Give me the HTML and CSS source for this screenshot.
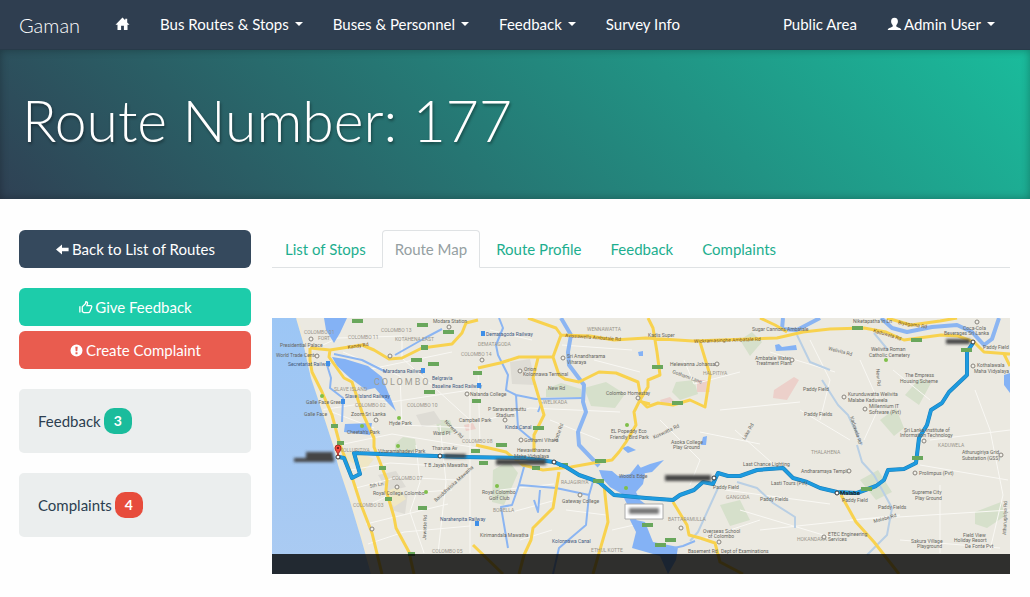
FILE: index.html
```html
<!DOCTYPE html>
<html lang="en">
<head>
<meta charset="utf-8">
<meta name="viewport" content="width=device-width, initial-scale=1">
<title>Gaman - Route Number: 177</title>
<link rel="stylesheet" href="styles.css">
</head>
<body>
<nav class="navbar">
  <a class="brand" href="#">Gaman</a>
  <a class="nav-item" href="#" aria-label="Home"><svg class="icon" viewBox="0 0 15 15"><path d="M7.500 .5 .5 7.800h2V13h3.600V8.800h2.800V13h3.600V7.800h2L12.200 5.400V1.800h-2v1.500z"/></svg></a>
  <button class="nav-item" type="button">Bus Routes &amp; Stops<span class="caret"></span></button>
  <button class="nav-item" type="button">Buses &amp; Personnel<span class="caret"></span></button>
  <button class="nav-item" type="button">Feedback<span class="caret"></span></button>
  <a class="nav-item" href="#">Survey Info</a>
  <a class="nav-item nav-right" href="#">Public Area</a>
  <button class="nav-item" type="button"><svg class="icon user" viewBox="0 0 15 15"><path d="M7.500 .8C5.200 .8 4 2.300 4.100 4.400c.1 1.600.7 2.800 1.600 3.600v1.400c-.7.9-4.400 1.300-4.900 3V13h13.400v-.6c-.5-1.700-4.200-2.100-4.900-3V8c.9-.8 1.500-2 1.600-3.600C11 2.300 9.800 .8 7.500 .8z"/></svg>Admin User<span class="caret"></span></button>
</nav>

<header class="hero">
  <h1>Route Number: 177</h1>
</header>

<div class="layout">
  <aside>
    <a class="btn btn-dark" href="#"><svg class="icon" viewBox="0 0 15 15"><path d="M1 7.500 7 2.500v3.200h6.600v3.600H7v3.200z"/></svg>Back to List of Routes</a>
    <button class="btn btn-green" type="button"><svg class="icon" viewBox="0 0 15 15"><path d="M1.200 6.200v6.200h1.300V6.200z"/><path d="M4.300 11.600V6.700l3.100-3 .5-2c1.500 0 1.900 1.100 1.500 2.300l-.5 1.700h3.800c1.100 0 1.300.8.900 1.700l-1.800 4.400c-.3.700-.7.900-1.400.9H6z" fill="none" stroke="currentColor" stroke-width="1.300"/></svg>Give Feedback</button>
    <button class="btn btn-red" type="button"><svg class="icon" viewBox="0 0 15 15"><path fill-rule="evenodd" d="M7.500 1.500a6 6 0 1 0 0 12 6 6 0 0 0 0-12zM6.300 3.700h2.400l-.4 4.600H6.700zM6.500 9.300h2v1.900h-2z"/></svg>Create Complaint</button>
    <div class="well">Feedback <span class="badge">3</span></div>
    <div class="well">Complaints <span class="badge badge-red">4</span></div>
  </aside>

  <main>
    <div class="tabs">
      <a class="tab" href="#">List of Stops</a>
      <a class="tab active" href="#" aria-current="page">Route Map</a>
      <a class="tab" href="#">Route Profile</a>
      <a class="tab" href="#">Feedback</a>
      <a class="tab" href="#">Complaints</a>
    </div>

    <svg class="map" viewBox="272 318 738 256" role="img" aria-label="Map of route 177">
      <defs>
        <linearGradient id="sea" x1="0" y1="0" x2="0" y2="1"><stop offset="0" stop-color="#9cc6f5"/><stop offset="1" stop-color="#abcbf2"/></linearGradient>
        <filter id="smudge" x="-20%" y="-60%" width="140%" height="220%"><feGaussianBlur stdDeviation="1.600"/></filter>
      </defs>
      <rect x="272" y="318" width="738" height="256" fill="#ebe9e1"/>

      <g class="park">
        <path d="M395 444l8-7 12 2 2 12-22 5zM546 389l15-6 20 6 1 8-36 0zM584 388l22-6 19 12-10 14-24-2zM493 470l16-9 9 12-14 32-12-3zM676 382l18-2 4 14-18 6-8-8zM975 512l26-10 4 14-18 12-12-4zM740 340l12-8 10 10-12 14zM860 480l18-10 14 22-16 8zM880 420l16-12 8 20-10 8zM435 420l15 0 4 12-14 4zM624 478l7 0 0 14-7-2zM720 505l20-5 10 20-20 6zM905 395l14-16 12 4-12 22z"/>
      </g>
      <path d="M510 362l20-3 6 26-24-1zM378 475l18-4 10 16-18 4zM393 495l15-3-3 22-14-4zM416 415l18-4 8 12-20 4z" fill="#dedcd5"/>
      <path d="M697 380l11 0 2 12-13 0zM774 390l20-13 5 3-12 20-14-2zM464 425l9-2 3 6-10 2zM660 400l10-3 5 5-13 2z" fill="#ecd0ca"/>
      <path d="M340 454l16-3 18 8-10 12zM384 492l14-5 8 12-12 8z" fill="#efe7c5"/>

      <g class="streets">
        <path d="M312 350L338 338 402 336M335 340V318M343 352L400 376 402 425 470 428M366 370L452 352M378 404L470 390M402 336V358M350 396L390 400M320 410L360 404M332 412L374 428M344 444L392 434 478 448M351 470L390 463 440 466M356 488L398 477 456 480M362 508L392 494 452 490M366 524L448 504M368 544L404 532 470 526M402 358L470 420M416 445L420 482 410 512 424 553M440 425L446 482 438 553M470 386V553M478 368L480 445M490 330L532 340M486 420L530 408 620 412M550 420L600 440M500 490L554 484M512 512L556 500M520 540L552 530M566 510L606 515M612 530L634 525M562 345L632 350M594 360L640 372M684 360L694 384 740 372M720 410L800 402M735 430L780 470M660 420L700 460 690 485M700 432L760 444M800 410L850 440M770 352L835 372M725 490L830 504M740 510L840 540M760 530L900 515M700 540L760 520M810 340L830 380 820 420M860 360L880 405 864 440M893 370L930 400M930 440L1010 430M920 465L1008 480M940 485V553M850 520L1010 510M900 540L1000 548M975 390L990 430 1003 495 990 550"/>
      </g>

      <path fill="url(#sea)" d="M272 318H297L304 342 309 365 312 378 322 408 334 445 339 465 350 498 362 538 372 574H272z"/>
      <path class="coast" d="M297 318L304 342 309 365 312 378 322 408 334 445 339 465 350 498 362 538 372 574"/>

      <g class="water">
        <path d="M324 318H347L340 333 334 343 326 330zM332 357L345 359 368 366 382 377 388 392 396 411 386 401 375 388 366 390 350 378 337 366zM345 424L372 423 370 435 344 432zM599 470L612 471 618 476 630 474 638 464 645 474 643 484 636 492 640 500 648 506 636 520 645 522 653 542 678 547 676 560 668 574 660 556 632 548 636 532 630 520 628 506 622 494 610 487 602 478zM775 345l4-1 3 3 14-2 1 5-21 1zM1004 375l6-2v20l-6-8zM622 448l6-2 8 4-8 3zM638 352l5-1 0 5-4 0zM703 437l4-1-1 9-5 0zM640 468l10-4 14-4-12 12-12 2z"/>
      </g>
      <g class="canal">
        <path class="wide" d="M561 318L571 335 568 352 569 365 584 385 583 402 586 412 578 432 579 445 599 466M881 318L892 328 907 332 932 327 957 325 972 332 984 345 992 339 999 318M783 318L782 329 797 330 820 318"/>
        <path d="M327 365L331 378 330 388 343 398 342 422M334 354L362 360 386 372M499 318L503 328 496 345 498 355 508 375 506 390 516 395 536 399 583 398M516 395L518 428 536 443M442 329L425 338 395 355M594 478L589 495 556 488 519 485 524 467M519 485L512 505 501 507 508 548M540 490L538 512 534 500M589 495L586 525 559 548 553 574M695 541L683 546 674 548M538 412l4-10"/>
        <path class="pale" d="M718 488L698 532 690 541M737 482L757 488 773 503 795 517 795 528M857 445L862 462 874 475 892 508 887 535 867 555M822 380L838 405 848 415 862 445M797 335L810 362 830 370M874 333L888 350"/>
      </g>

      <g class="road">
        <path d="M310 348L310 360 312 372 322 392 332 415 340 445 344 455 352 477 360 502 372 533 382 574M310 348L330 350 362 345 374 350 389 359 402 358 422 348 452 344 462 333 466 323 478 320M330 350L329 357 344 378 352 382 362 412 374 438 374 447 387 480 386 490 394 517 396 528 409 552 414 574M478 368L500 363 519 357 553 357 561 335 556 328 528 318M561 335L590 336 614 340 646 338 693 341 777 338 803 332 830 329 864 328 886 332 904 340 941 335 958 336 974 342 984 352 1010 354M887 318L911 325 940 321 957 318M760 318L775 325 787 332M1004 354L1010 366M553 357L559 375 565 379 579 382 599 372 616 373 638 382 641 398 634 412 636 425 626 442 619 452 612 460 599 462 571 467 543 470 523 465 506 452 476 445M538 358L533 378 544 415 534 435 534 452M648 318L653 328 657 352 660 375 648 380 648 387 640 400 647 407 658 403 673 405 690 400 705 407 710 375 700 342M642 402L650 404M559 472L553 508 533 528 531 540 524 555 519 574M604 485L608 522 593 574M473 545L503 574M673 502L687 525 689 535 700 538 715 543 720 562 743 574M841 495L856 522 874 542 899 574"/>
      </g>

      <g class="shields">
        <path d="M352 319h11v4h-11zM417 323h11v4h-11zM443 330h11v4h-11zM421 345h7v5h-7zM411 358h11v4h-11zM428 362h11v4h-11zM424 390h11v4h-11zM331 424h7v4h-7zM337 441h7v4h-7zM473 371h9v4h-9zM472 399h9v4h-9zM533 426h11v4h-11zM496 443h11v4h-11zM471 449h9v4h-9zM479 461h9v4h-9zM532 466h8v4h-8zM595 459h11v4h-11zM559 463h9v4h-9zM593 479h11v4h-11zM379 466h7v4h-7zM385 497h7v4h-7zM418 506h9v4h-9zM408 552h7v4h-7zM652 365h11v4h-11zM672 401h11v4h-11zM642 523h11v4h-11zM665 538h11v4h-11zM655 543h11v4h-11zM852 326h11v4h-11zM911 338h11v4h-11zM961 348h11v4h-11zM861 487h11v4h-11zM912 456h11v4h-11z"/>
      </g>

      <path class="route-edge" d="M339 457L344 458 352 478 360 474 354 453 462 457 523 458 554 462 566 467 579 475 599 482 614 495 646 498 673 500 680 495 694 490 703 482 713 484 718 473 728 476 740 476 757 470 783 468 793 478 807 482 820 488 837 492 857 493 876 486 884 480 888 470 904 469 916 463 919 438 927 425 931 410 942 403 949 392 967 375 967 352 973 343"/>
      <path class="route" d="M339 457L344 458 352 478 360 474 354 453 462 457 523 458 554 462 566 467 579 475 599 482 614 495 646 498 673 500 680 495 694 490 703 482 713 484 718 473 728 476 740 476 757 470 783 468 793 478 807 482 820 488 837 492 857 493 876 486 884 480 888 470 904 469 916 463 919 438 927 425 931 410 942 403 949 392 967 375 967 352 973 343"/>
      <path d="M861 487h11v4h-11zM912 456h11v4h-11zM961 348h11v4h-11zM593 479h11v4h-11z" fill="#69a75c"/>

      <g class="district">
        <text x="304" y="334">COLOMBO 01</text><text x="318" y="340">FORT</text><text x="348" y="339">COLOMBO 11</text><text x="381" y="332">COLOMBO 13</text><text x="395" y="341">KOTAHENA EAST</text><text x="334" y="391">SLAVE ISLAND</text><text x="355" y="407">COLOMBO 02</text><text x="407" y="407">COLOMBO 10</text><text x="461" y="356">COLOMBO 14</text><text x="478" y="346">DEMATAGODA</text><text x="462" y="443">COLOMBO 08</text><text x="392" y="480">COLOMBO 07</text><text x="353" y="507">COLOMBO 03</text><text x="432" y="553">COLOMBO 05</text><text x="587" y="331">WENNAWATTA</text><text x="543" y="404">WELIKADA</text><text x="493" y="512">BORELLA</text><text x="561" y="484">RAJAGIRIYA</text><text x="591" y="552">ETHUL KOTTE</text><text x="668" y="521">BATTARAMULLA</text><text x="726" y="499">GANGODA</text><text x="703" y="375">HALPITIYA</text><text x="797" y="541">HOKANDARA</text><text x="811" y="454">THALAHENA</text><text x="938" y="447">KADUWELA</text><text x="340" y="452">KOLLUPITIYA</text>
      </g>
      <text class="city" x="374" y="385">COLOMBO</text>

      <g class="place">
        <text x="280" y="347">Presidential Palace</text><text x="276" y="357">World Trade Center</text><text x="433" y="323">Modara Station</text><text x="306" y="404">Galle Face Green</text><text x="304" y="416">Galle Face</text><text x="351" y="416">Zoom Sri Lanka</text><text x="347" y="434">Cheetah's Park</text><text x="389" y="425">Hyde Park</text><text x="433" y="435">Ward Pl</text><text x="470" y="396">Nalanda College</text><text x="459" y="422">Campbell Park</text><text x="488" y="411">P Saravanamuttu</text><text x="496" y="417">Stadium</text><text x="524" y="371">Orion</text><text x="523" y="376">Kolonnawa Terminal</text><text x="567" y="358">Sri Anandharama</text><text x="567" y="364">Viharaya</text><text x="606" y="395">Colombo Homestay</text><text x="611" y="433">EL Popeddy Eco</text><text x="610" y="439">Friendly Bird Park</text><text x="524" y="442">Gothami Vihara</text><text x="517" y="452">Hewavitharana</text><text x="514" y="458">Maha Vidyalaya</text><text x="548" y="390">New Rd</text><text x="619" y="478">Wood's Edge</text><text x="562" y="503">Gateway College</text><text x="482" y="494">Royal Colombo</text><text x="489" y="500">Golf Club</text><text x="480" y="537">Kirimandala Mawatha</text><text x="373" y="495">Royal College Colombo</text><text x="378" y="453">Viharamahadevi Park</text><text x="424" y="467">T B Jayah Mawatha</text><text x="432" y="450">Tharuna Av</text><text x="648" y="337">Kadis Super</text><text x="752" y="331">Sugar Cannons Ambatale</text><text x="670" y="366">Helewanna Johansan</text><text x="755" y="360">Ambatale Water</text><text x="756" y="365">Treatment Plant</text><text x="803" y="391">Paddy Field</text><text x="804" y="416">Paddy Fields</text><text x="671" y="444">Asoka College</text><text x="673" y="449">Play Ground</text><text x="853" y="323">Niketapatha In Ln</text><text x="871" y="351">Welivita Roman</text><text x="869" y="357">Catholic Cemetery</text><text x="963" y="330">Coca-Cola</text><text x="944" y="335">Beverages Sri Lanka</text><text x="983" y="349">Paddy Field</text><text x="977" y="367">Kothalawala</text><text x="974" y="373">Maha Vidyalaya</text><text x="905" y="377">The Empress</text><text x="900" y="383">Housing Scheme</text><text x="848" y="396">Kurunduwatta Welivita</text><text x="848" y="402">Malabe Kaduwela</text><text x="869" y="408">Millennium IT</text><text x="869" y="414">Software (Pvt)</text><text x="904" y="432">Sri Lanka Institute of</text><text x="900" y="437">Information Technology</text><text x="962" y="454">Athurugiriya Grid</text><text x="962" y="460">Substation (GSS)</text><text x="919" y="475">Prolimpus (Pvt)</text><text x="912" y="494">Supreme City</text><text x="915" y="500">Play Ground</text><text x="842" y="502">Paddy Field</text><text x="878" y="509">Paddy Fields</text><text x="828" y="536">ETEC Engineering</text><text x="828" y="541">Services</text><text x="911" y="543">Sakura Village</text><text x="917" y="548">Playground</text><text x="963" y="537">Field View</text><text x="954" y="542">Holiday Resort</text><text x="965" y="548">De Fonte Pvt</text><text x="743" y="466">Last Chance Lighting</text><text x="801" y="473">Andharamaya Temple</text><text x="771" y="485">Lasti Tours (Pvt)</text><text x="713" y="489">Paddy Field</text><text x="760" y="501">Paddy Fields</text><text x="703" y="533">Overseas School</text><text x="708" y="538">of Colombo</text><text x="688" y="553">Basement Rd</text><text x="721" y="553">Dept of Examinations</text>
        <text transform="translate(436 502) rotate(-42)">Bauddhaloka Mawatha</text><text transform="translate(444 422) rotate(44)">Norway Rd</text><text transform="translate(672 373) rotate(20)">Gothami Lane</text><text transform="translate(654 439) rotate(-25)">Koswatta Rd</text><text transform="translate(828 350) rotate(14)">Welivita Rd</text><text transform="translate(557 442) rotate(-70)">Kotte Rd</text><text transform="translate(426 540) rotate(-88)">Jawatte Rd</text><text transform="translate(850 417) rotate(72)">Kaduwela Rd</text><text transform="translate(874 523) rotate(-15)">Malabe Rd</text><text transform="translate(370 488) rotate(-12)">5th Ln</text><text transform="translate(745 440) rotate(-60)">Lake Rd</text><text transform="translate(1006 535) rotate(-88)">Athurugiriya Rd</text><text transform="translate(876 369) rotate(85)">New Rd</text>
      </g>
      <g class="rail">
        <text x="288" y="366">Secretariat Railway</text><text x="345" y="398">Slave Island Railway</text><text x="383" y="373">Maradana Railway</text><text x="432" y="380">Belgravia</text><text x="432" y="388">Baseline Road Railway</text><text x="486" y="336">Dematagoda Railway</text><text x="505" y="429">Kinda Canal</text><text x="552" y="543">Kolonnawa Canal</text><text x="440" y="521">Narahenpita Railway</text>
        <path d="M326 361h4v5h-4zM341 399h4v5h-4zM421 368h4v5h-4zM481 331h4v5h-4zM477 383h4v5h-4zM475 521h4v5h-4z"/>
      </g>
      <g class="road-name">
        <text transform="translate(348 349) rotate(-9)">Kandy Rd</text><text transform="translate(565 337) rotate(4)">Avissawella Ambatale Rd</text><text transform="translate(694 343) rotate(-2)">Wickramasinghe Ambatale Rd</text><text transform="translate(873 332) rotate(17)">Kaduwela Rd</text><text transform="translate(898 324) rotate(9)">Biyagama Rd</text>
      </g>
      <g class="pins">
        <circle cx="317" cy="356" r="2"/><circle cx="311" cy="339" r="2"/><circle cx="390" cy="356" r="2"/><circle cx="376" cy="420" r="2"/><circle cx="449" cy="327" r="2"/><circle cx="482" cy="360" r="2"/><circle cx="467" cy="394" r="2"/><circle cx="520" cy="371" r="2"/><circle cx="563" cy="358" r="2"/><circle cx="505" cy="420" r="2"/><circle cx="521" cy="440" r="2"/><circle cx="580" cy="495" r="2"/><circle cx="638" cy="398" r="2"/><circle cx="717" cy="364" r="2"/><circle cx="792" cy="360" r="2"/><circle cx="977" cy="322" r="2"/><circle cx="973" cy="366" r="2"/><circle cx="844" cy="397" r="2"/><circle cx="865" cy="409" r="2"/><circle cx="924" cy="441" r="2"/><circle cx="1001" cy="455" r="2"/><circle cx="915" cy="473" r="2"/><circle cx="824" cy="537" r="2"/><circle cx="681" cy="528" r="2"/><circle cx="719" cy="542" r="2"/><circle cx="849" cy="471" r="2"/><circle cx="397" cy="487" r="2"/><circle cx="372" cy="529" r="2"/>
      </g>
      <g class="park-pins"><circle cx="322" cy="396" r="2"/><circle cx="362" cy="426" r="2"/><circle cx="399" cy="418" r="2"/><circle cx="398" cy="446" r="2"/><circle cx="426" cy="492" r="2"/><circle cx="497" cy="486" r="2"/><circle cx="627" cy="425" r="2"/><circle cx="626" cy="488" r="2"/><circle cx="886" cy="360" r="2"/></g>

      <g class="smudge" filter="url(#smudge)">
        <path d="M306 452h27v5h1v5h-40v-4h12zM496 459h50v6h-50zM665 475h46v6h-46zM946 339h24v5h-24z"/>
        <path d="M444 454h22v4h-22z"/>
      </g>
      <path d="M625 504h38v15h-38z" fill="#fff" stroke="#aaa"/>
      <path d="M629 508h30v6h-30z" fill="#777" filter="url(#smudge)"/>
      <text class="stop" x="840" y="495">Malabe</text>
      <g fill="#fff" stroke="#333"><circle cx="338" cy="457" r="2"/><circle cx="440" cy="456" r="2"/><circle cx="554" cy="462" r="2"/><circle cx="714" cy="478" r="2"/><circle cx="837" cy="493" r="2"/><circle cx="973" cy="342" r="2"/></g>
      <path d="M338 456c0-4-3-5-3-8a3 3 0 0 1 6 0c0 3-3 4-3 8z" fill="#f44a3c" stroke="#a82c23"/><circle cx="338" cy="448" r="1" fill="#521510"/>
      <rect x="272" y="554" width="738" height="20" fill="#000" fill-opacity=".8"/>
    </svg>
  </main>
</div>
</body>
</html>
```
FILE: styles.css
```css
* { box-sizing: border-box; }

body {
  margin: 0;
  background: #fefefe;
  color: #2c3e50;
  font: 15px/22px Lato, sans-serif;
}

a { text-decoration: none; }
button { font: inherit; border: 0; cursor: pointer; }

.icon { width: 15px; height: 15px; fill: currentColor; flex: none; }

.navbar {
  display: flex;
  align-items: center;
  min-height: 50px;
  padding: 0 20px 0 19px;
  background: #2f3e50;
  border-bottom: 1px solid #283a49;
}
.brand { margin-right: 20px; color: #fff; font-size: 20px; font-weight: 300; }
.nav-item {
  display: flex;
  align-items: center;
  padding: 13px 15px 14px;
  background: none;
  color: #fff;
  white-space: nowrap;
}
.nav-item:last-child { padding-right: 15px; }
.nav-right { margin-left: auto; }
.user { margin-right: 2px; }
.caret {
  margin-left: 6px;
  border: 4px solid transparent;
  border-top-color: currentColor;
  border-bottom: 0;
}
.navbar > :last-child { margin-right: -1px; padding-right: 15px; }
.navbar { padding-right: 0; }
.navbar > :last-child { margin-right: 20px; }

.hero {
  padding: 34px 22px 43px;
  background: linear-gradient(45deg, #2f4154, #1abc9c);
  box-shadow: inset 0 0 8px rgba(0, 0, 0, .3);
}
.hero h1 {
  margin: 0;
  color: #fff;
  font-size: 57px;
  line-height: 72px;
  font-weight: 300;
  text-shadow: 1px 2px 3px rgba(0, 0, 0, .4);
}

.layout {
  display: grid;
  grid-template-columns: 232fr 738fr;
  gap: 21px;
  padding: 31px 20px 23px 19px;
}

.btn {
  display: flex;
  align-items: center;
  justify-content: center;
  gap: 2px;
  width: 100%;
  padding: 8px 12px;
  border-radius: 6px;
  color: #fff;
}
.btn-dark { margin-bottom: 20px; background: #35495d; }
.btn-green { margin-bottom: 5px; background: #1dccaa; }
.btn-red { background: #e95c4f; }

.well {
  display: flex;
  align-items: center;
  gap: 3px;
  margin-top: 20px;
  padding: 19px;
  border-radius: 5px;
  background: #ebeeee;
}
.badge {
  padding: 0 10px;
  border-radius: 10px;
  background: #1abc9c;
  color: #fff;
  font-size: 14px;
  font-weight: 700;
  line-height: 26px;
}
.badge-red { background: #e74c3c; }

.tabs {
  display: flex;
  gap: 3px;
  margin-bottom: 50px;
  border-bottom: 1px solid #dfe2e4;
}
.tab {
  margin-bottom: -1px;
  padding: 7px 12px;
  border: 1px solid transparent;
  border-radius: 4px 4px 0 0;
  color: #1dae8f;
}
.tab.active {
  border-color: #dfe2e4 #dfe2e4 #fefefe;
  background: #fefefe;
  color: #95a0a2;
}

.map { display: block; width: 100%; height: auto; }
.map text { font-family: Roboto, sans-serif; font-size: 5px; }
.park { fill: #d6e0cb; }
.streets { fill: none; stroke: #f9f8f4; }
.coast { fill: none; stroke: #f1ead6; stroke-width: 2; }
.water { fill: #84b2f5; }
.canal { fill: none; stroke: #8bb5f2; stroke-width: 2; stroke-linejoin: round; }
.canal .wide { stroke-width: 4; }
.canal .pale { stroke: #b9cfe4; }
.road { fill: none; stroke: #f8d24e; stroke-width: 3; stroke-linejoin: round; }
.shields { fill: #69a75c; }
.route-edge, .route { fill: none; stroke: #1c7db6; stroke-width: 4; stroke-linejoin: round; }
.route { stroke: #1d9be0; stroke-width: 3; }
.district { fill: #99958b; }
.map .city { fill: #a09c92; font-size: 9px; letter-spacing: 2px; }
.place { fill: #666660; }
.rail { fill: #43597f; }
.rail path { fill: #3f8fe8; }
.road-name { fill: #7c5a1e; }
.pins { fill: #f2f0ea; stroke: #88847c; }
.park-pins { fill: #7fbf4a; }
.smudge { fill: #444; }
.map .stop { fill: #222; font-size: 6px; font-weight: 700; }
```
